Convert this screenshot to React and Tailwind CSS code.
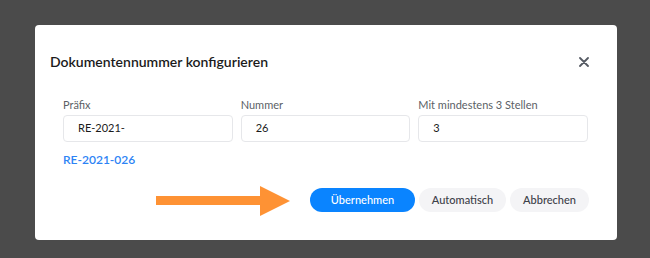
import React from 'react';

const fields = [
  { label: 'Präfix', value: 'RE-2021-' },
  { label: 'Nummer', value: '26' },
  { label: 'Mit mindestens 3 Stellen', value: '3' },
];

export default function App() {
  return (
    <div
      className="relative h-[258px] w-[650px] overflow-hidden bg-[#4b4b4b] pl-[35px] pt-[25px]"
      style={{ fontFamily: 'Lato, "Noto Sans", sans-serif' }}
    >
      <div className="h-[215px] w-[582px] rounded-[4px] bg-white">
        <div className="flex items-center justify-between pl-[15px] pr-[28px] pt-[27px]">
          <h2 className="text-[14px] font-semibold leading-5 text-[#1b1b1b]">
            Dokumentennummer konfigurieren
          </h2>
          <button className="text-[#555a63]">
            <svg width="10" height="10" viewBox="0 0 10 10">
              <path d="M1 1L9 9M9 1L1 9" stroke="currentColor" strokeWidth="1.8" strokeLinecap="round" />
            </svg>
          </button>
        </div>

        <div className="mt-[26px] grid grid-cols-3 gap-2 pl-[28px] pr-[29px]">
          {fields.map((f) => (
            <div key={f.label}>
              <label className="block text-[11px] leading-[14px] text-[#5b5f66]">{f.label}</label>
              <div className="mt-[3px] flex h-[27px] items-center rounded-[4px] border border-[#e6e7ea] px-[14px] text-[11px] text-[#1b1b1b]">
                {f.value}
              </div>
            </div>
          ))}
        </div>

        <div className="mt-[10px] pl-[28px] text-[12px] font-semibold leading-4 text-[#2d83f5]">
          RE-2021-026
        </div>

        <div className="mt-[20px] flex justify-end gap-1 pr-[28px]">
          <button className="h-6 w-[105px] rounded-full bg-[#0a84ff] text-[11px] font-medium text-white">
            Übernehmen
          </button>
          <button className="h-6 w-[87px] rounded-full bg-[#f4f4f6] text-[11px] font-medium text-[#3d4149]">
            Automatisch
          </button>
          <button className="h-6 w-[79px] rounded-full bg-[#f4f4f6] text-[11px] font-medium text-[#3d4149]">
            Abbrechen
          </button>
        </div>
      </div>

      <svg className="absolute left-[156px] top-[186px]" width="135" height="30" viewBox="0 0 135 30">
        <rect x="0" y="10" width="106" height="9" fill="#fe9234" />
        <polygon points="104,0 134,15 104,30" fill="#fe9234" />
      </svg>
    </div>
  );
}
